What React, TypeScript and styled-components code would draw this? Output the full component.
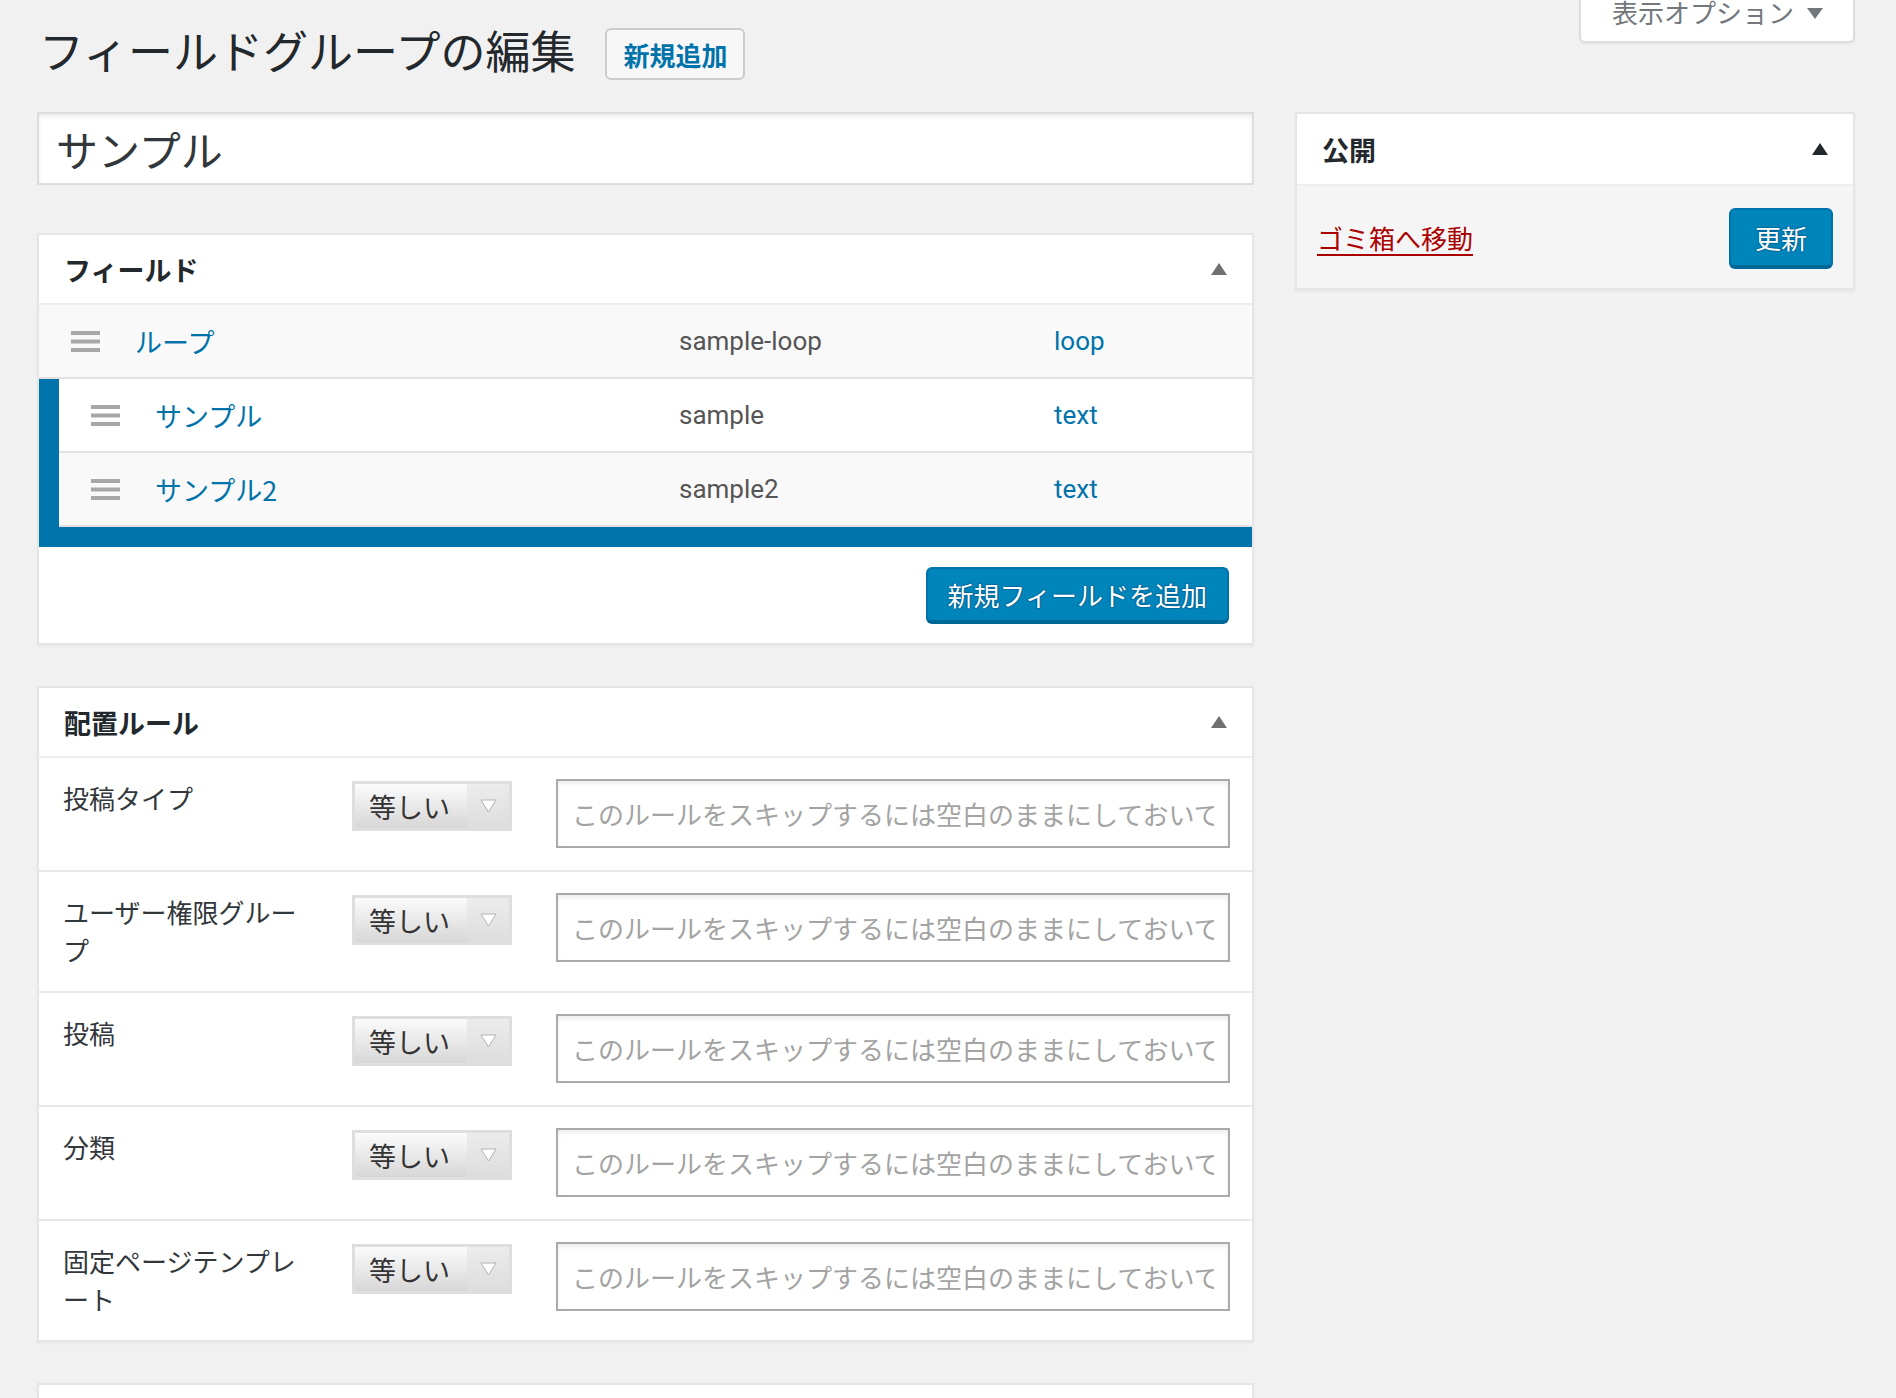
import React from 'react';
import styled, { createGlobalStyle } from 'styled-components';

const GlobalStyle = createGlobalStyle`
  html, body {
    margin: 0;
    padding: 0;
    background: #f1f1f1;
  }
  body {
    font-family: Roboto, "Noto Sans CJK JP", sans-serif;
    color: #23282d;
  }
  *, *::before, *::after {
    box-sizing: border-box;
  }
`;

const Page = styled.div`
  min-height: 1398px;
  padding: 0 41px 0 37px;
  overflow: hidden;
`;

const Header = styled.header`
  display: flex;
  justify-content: space-between;
  align-items: flex-start;
  height: 112px;
`;

const TitleRow = styled.div`
  display: flex;
  align-items: center;
  padding: 28px 0 0 2px;
`;

const Title = styled.h1`
  margin: -8px 0 0;
  font-family: "Noto Sans CJK JP", sans-serif;
  font-size: 45px;
  font-weight: 400;
  line-height: 52px;
  color: #23282d;
`;

const AddNewButton = styled.a`
  display: flex;
  align-items: center;
  height: 52px;
  margin-left: 30px;
  padding: 0 16px;
  border: 2px solid #ccc;
  border-radius: 6px;
  background: #f7f7f7;
  color: #0073aa;
  font-family: "Noto Sans CJK JP", sans-serif;
  font-size: 26px;
  font-weight: 700;
  text-decoration: none;
`;

const ScreenOptionsTab = styled.button`
  display: flex;
  align-items: flex-start;
  gap: 13px;
  height: 43px;
  padding: 0 30px 0 31px;
  background: #fff;
  border: 2px solid #ddd;
  border-top: none;
  border-radius: 0 0 6px 6px;
  box-shadow: 0 2px 2px rgba(0, 0, 0, 0.04);
  color: #72777c;
  font-family: Roboto, "Noto Sans CJK JP", sans-serif;
  font-size: 26px;
  line-height: 28px;
  cursor: pointer;

  svg {
    margin-top: 8px;
  }
`;

const Columns = styled.div`
  display: flex;
  align-items: flex-start;
  gap: 41px;
`;

const Main = styled.div`
  flex: 1;
  min-width: 0;
`;

const Sidebar = styled.aside`
  width: 560px;
  flex-shrink: 0;
`;

const TitleField = styled.input`
  display: block;
  width: 100%;
  height: 73px;
  margin: 0 0 48px;
  padding: 0 17px;
  border: 2px solid #ddd;
  background: #fff;
  box-shadow: inset 0 3px 4px rgba(0, 0, 0, 0.08);
  color: #32373c;
  font-family: "Noto Sans CJK JP", sans-serif;
  font-size: 42px;
  outline: none;
`;

const Postbox = styled.section<{ $minHeight?: number }>`
  background: #fff;
  border: 2px solid #e5e5e5;
  box-shadow: 0 2px 2px rgba(0, 0, 0, 0.04);
  margin-bottom: 41px;
  min-height: ${(p) => (p.$minHeight ? `${p.$minHeight}px` : 'auto')};
`;

const PostboxHeader = styled.div<{ $height?: number }>`
  display: flex;
  align-items: center;
  justify-content: space-between;
  height: ${(p) => p.$height ?? 70}px;
  padding: 0 25px;
  border-bottom: 2px solid #eee;
`;

const PostboxTitle = styled.h2`
  margin: 0;
  font-family: "Noto Sans CJK JP", sans-serif;
  font-size: 27px;
  font-weight: 700;
  color: #23282d;
`;

const Toggle = ({ color }: { color: string }) => (
  <svg width="16" height="12" viewBox="0 0 16 12" aria-hidden>
    <polygon points="8,0 16,12 0,12" fill={color} />
  </svg>
);

const FieldList = styled.div``;

const NestedGroup = styled.div`
  border-left: 20px solid #0073aa;
  border-bottom: 20px solid #0073aa;
`;

const FieldRow = styled.div<{ $alt?: boolean; $indent?: number }>`
  display: grid;
  grid-template-columns: 64px ${(p) => 544 - (p.$indent ?? 0)}px 375px 1fr;
  align-items: center;
  height: 74px;
  padding-left: 32px;
  border-bottom: 2px solid #e1e1e1;
  background: ${(p) => (p.$alt ? '#f9f9f9' : '#fff')};
`;

const FieldLabel = styled.a`
  font-family: "Noto Sans CJK JP", sans-serif;
  font-size: 27px;
  color: #0073aa;
  text-decoration: none;
`;

const FieldName = styled.span`
  font-family: Roboto, "Noto Sans CJK JP", sans-serif;
  font-size: 26px;
  color: #555;
`;

const FieldType = styled.span`
  font-family: Roboto, "Noto Sans CJK JP", sans-serif;
  font-size: 26px;
  color: #0073aa;
`;

const DragHandle = () => (
  <svg width="29" height="21" viewBox="0 0 29 21" aria-hidden>
    <rect x="0" y="0" width="29" height="4" fill="#a7a7a7" />
    <rect x="0" y="8.5" width="29" height="4" fill="#a7a7a7" />
    <rect x="0" y="17" width="29" height="4" fill="#a7a7a7" />
  </svg>
);

const FieldsFooter = styled.div`
  display: flex;
  justify-content: flex-end;
  padding: 20px 23px 21px;
`;

const PrimaryButton = styled.button<{ $height: number; $padX: number }>`
  height: ${(p) => p.$height}px;
  padding: 0 ${(p) => p.$padX}px;
  background: #0085ba;
  border: 2px solid #0073aa;
  border-bottom-color: #006799;
  border-radius: 6px;
  box-shadow: 0 2px 0 #006799;
  color: #fff;
  font-family: "Noto Sans CJK JP", sans-serif;
  font-size: 26px;
  text-shadow: 0 -1px 1px #006799, 1px 0 1px #006799, 0 1px 1px #006799,
    -1px 0 1px #006799;
  cursor: pointer;
`;

const RuleRow = styled.div`
  display: grid;
  grid-template-columns: 245px 160px 1fr;
  column-gap: 44px;
  align-items: start;
  padding: 21px 22px 22px 24px;
  border-bottom: 2px solid #e8e8e8;

  &:last-child {
    border-bottom: none;
  }
`;

const RuleLabel = styled.div`
  font-family: "Noto Sans CJK JP", sans-serif;
  font-size: 26px;
  line-height: 38px;
  color: #32373c;
`;

const SelectBox = styled.div`
  display: flex;
  height: 50px;
  margin-top: 2px;
  border: 3px solid #dedede;
`;

const SelectValue = styled.span`
  flex: 1;
  display: flex;
  align-items: center;
  padding-left: 14px;
  background: linear-gradient(#fbfbfb, #d7d7d7);
  font-family: "Noto Sans CJK JP", sans-serif;
  font-size: 27px;
  color: #333;
`;

const SelectArrow = styled.span`
  width: 42px;
  display: flex;
  align-items: center;
  justify-content: center;
  background: linear-gradient(#ececec, #dddddd);
`;

const RuleInput = styled.input`
  display: block;
  width: 100%;
  height: 69px;
  padding: 0 14px;
  border: 2px solid #aaa;
  background: #fff;
  box-shadow: inset 0 3px 4px rgba(0, 0, 0, 0.07);
  font-family: "Noto Sans CJK JP", sans-serif;
  font-size: 26px;
  color: #32373c;
  outline: none;

  &::placeholder {
    color: #a3a3a3;
  }
`;

const PublishActions = styled.div`
  display: flex;
  align-items: center;
  justify-content: space-between;
  padding: 22px 20px 21px 20px;
  background: #f5f5f5;
`;

const TrashLink = styled.a`
  font-family: "Noto Sans CJK JP", sans-serif;
  font-size: 26px;
  color: #a00;
  text-decoration: underline;
  text-underline-offset: 5px;
`;

const fields = [
  { label: 'サンプル', name: 'sample', type: 'text' },
  { label: 'サンプル2', name: 'sample2', type: 'text' },
];

const rules = [
  '投稿タイプ',
  'ユーザー権限グループ',
  '投稿',
  '分類',
  '固定ページテンプレート',
];

const PLACEHOLDER = 'このルールをスキップするには空白のままにしておいて';

export default function App() {
  return (
    <>
      <GlobalStyle />
      <Page>
        <Header>
          <TitleRow>
            <Title>フィールドグループの編集</Title>
            <AddNewButton href="#">新規追加</AddNewButton>
          </TitleRow>
          <ScreenOptionsTab>
            表示オプション
            <svg width="16" height="11" viewBox="0 0 16 11" aria-hidden>
              <polygon points="0,0 16,0 8,11" fill="#72777c" />
            </svg>
          </ScreenOptionsTab>
        </Header>

        <Columns>
          <Main>
            <TitleField defaultValue="サンプル" />

            <Postbox>
              <PostboxHeader>
                <PostboxTitle>フィールド</PostboxTitle>
                <Toggle color="#6f6f6f" />
              </PostboxHeader>
              <FieldList>
                <FieldRow $alt>
                  <DragHandle />
                  <FieldLabel href="#">ループ</FieldLabel>
                  <FieldName>sample-loop</FieldName>
                  <FieldType>loop</FieldType>
                </FieldRow>
                <NestedGroup>
                  {fields.map((f, i) => (
                    <FieldRow key={f.name} $alt={i % 2 === 1} $indent={20}>
                      <DragHandle />
                      <FieldLabel href="#">{f.label}</FieldLabel>
                      <FieldName>{f.name}</FieldName>
                      <FieldType>{f.type}</FieldType>
                    </FieldRow>
                  ))}
                </NestedGroup>
              </FieldList>
              <FieldsFooter>
                <PrimaryButton $height={55} $padX={20}>
                  新規フィールドを追加
                </PrimaryButton>
              </FieldsFooter>
            </Postbox>

            <Postbox>
              <PostboxHeader>
                <PostboxTitle>配置ルール</PostboxTitle>
                <Toggle color="#6f6f6f" />
              </PostboxHeader>
              {rules.map((r) => (
                <RuleRow key={r}>
                  <RuleLabel>{r}</RuleLabel>
                  <SelectBox>
                    <SelectValue>等しい</SelectValue>
                    <SelectArrow>
                      <svg width="17" height="14" viewBox="0 0 17 14" aria-hidden>
                        <polygon
                          points="1,1 16,1 8.5,13"
                          fill="#fff"
                          stroke="#b2b2b2"
                          strokeWidth="1"
                        />
                      </svg>
                    </SelectArrow>
                  </SelectBox>
                  <RuleInput placeholder={PLACEHOLDER} />
                </RuleRow>
              ))}
            </Postbox>

            <Postbox $minHeight={80} />
          </Main>

          <Sidebar>
            <Postbox>
              <PostboxHeader $height={72}>
                <PostboxTitle>公開</PostboxTitle>
                <Toggle color="#23282d" />
              </PostboxHeader>
              <PublishActions>
                <TrashLink href="#">ゴミ箱へ移動</TrashLink>
                <PrimaryButton $height={59} $padX={24}>
                  更新
                </PrimaryButton>
              </PublishActions>
            </Postbox>
          </Sidebar>
        </Columns>
      </Page>
    </>
  );
}
